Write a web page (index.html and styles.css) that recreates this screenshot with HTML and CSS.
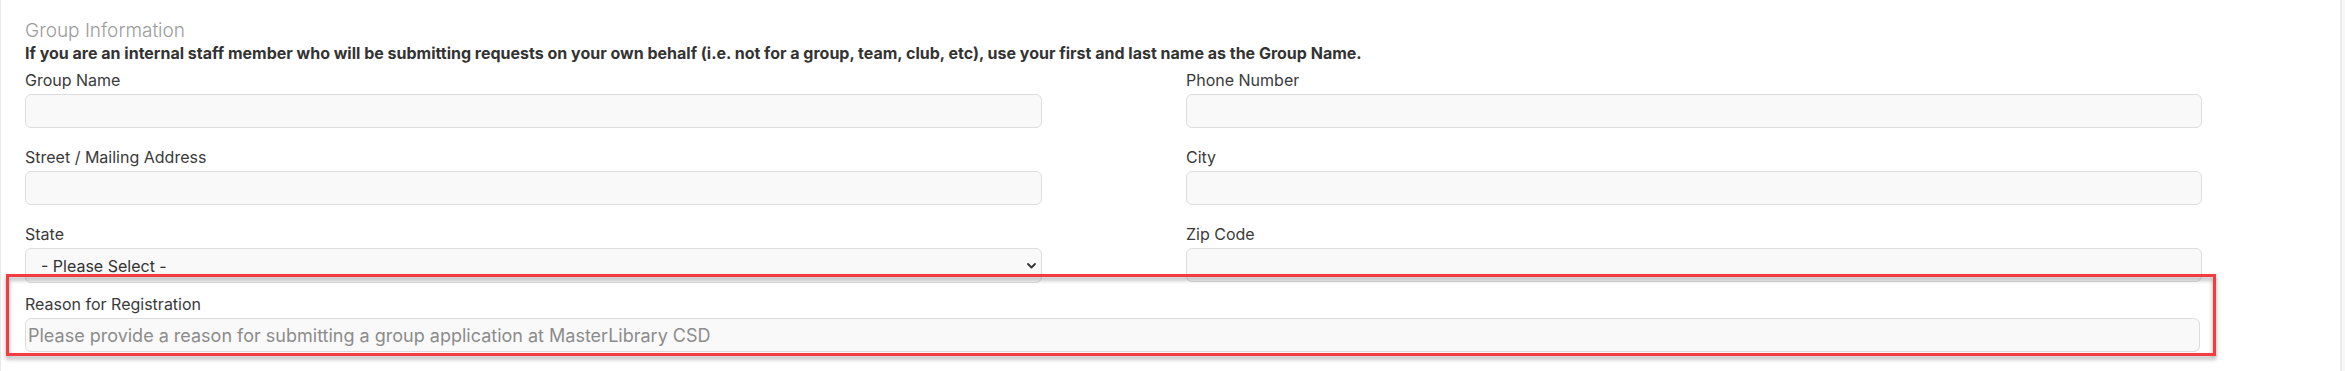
FILE: index.html
```html
<!DOCTYPE html>
<html lang="en">
<head>
<meta charset="utf-8">
<title>Group Information</title>
<link rel="stylesheet" href="styles.css">
</head>
<body>
<div class="page">
  <main class="panel">
    <h2 class="section-title">Group Information</h2>
    <p class="note">If you are an internal staff member who will be submitting requests on your own behalf (i.e. not for a group, team, club, etc), use your first and last name as the Group Name.</p>
    <div class="grid">
      <div class="field">
        <label class="label">Group Name</label>
        <input class="input" type="text">
      </div>
      <div class="field">
        <label class="label">Phone Number</label>
        <input class="input" type="text">
      </div>
      <div class="field">
        <label class="label">Street / Mailing Address</label>
        <input class="input" type="text">
      </div>
      <div class="field">
        <label class="label">City</label>
        <input class="input" type="text">
      </div>
      <div class="field">
        <label class="label">State</label>
        <div class="select-wrap">
          <select class="select">
            <option>- Please Select -</option>
          </select>
          <svg class="chevron" width="9" height="6" viewBox="0 0 9 6"><path d="M1 1l3.5 3.5L8 1" fill="none" stroke="#333" stroke-width="1.8" stroke-linecap="round" stroke-linejoin="round"/></svg>
        </div>
      </div>
      <div class="field">
        <label class="label">Zip Code</label>
        <input class="input" type="text">
      </div>
    </div>
    <div class="reason">
      <label class="label">Reason for Registration</label>
      <input class="input input-reason" type="text" placeholder="Please provide a reason for submitting a group application at MasterLibrary CSD">
      <div class="highlight"></div>
    </div>
  </main>
  <div class="scroll-strip"></div>
</div>
</body>
</html>
```

FILE: styles.css
```css
* { box-sizing: border-box; }

html, body {
  margin: 0;
  padding: 0;
  background: #ffffff;
}

body {
  font-family: Inter, "Noto Sans", "Liberation Sans", sans-serif;
  color: #333333;
  height: 371px;
  overflow: hidden;
}

.page {
  display: flex;
  height: 371px;
}

.panel {
  flex: 1;
  border-left: 1px solid #e8e8e8;
  padding: 19px 0 0 24px;
}

.section-title {
  margin: 0;
  font-size: 19px;
  line-height: 24px;
  font-weight: 300;
  color: #9c9c9c;
}

.note {
  margin: 0;
  font-size: 16px;
  line-height: 20px;
  font-weight: 700;
  color: #333333;
}

.grid {
  display: grid;
  grid-template-columns: 1017px 1016px;
  column-gap: 144px;
  row-gap: 19px;
  margin-top: 7px;
}

.field {
  display: flex;
  flex-direction: column;
}

.label {
  display: block;
  font-size: 16px;
  line-height: 20px;
  color: #3a3a3a;
  margin-bottom: 4px;
}

.input {
  display: block;
  width: 100%;
  height: 34px;
  border: 1px solid #dddddd;
  border-radius: 6px;
  background: #f9f9f9;
  font-family: inherit;
  font-size: 18px;
  padding: 1px 2px;
  color: #333;
  outline: none;
}

.input::placeholder {
  color: #8c8c8c;
}

.select-wrap {
  position: relative;
}

.select {
  display: block;
  width: 100%;
  height: 35px;
  border: 1px solid #dddddd;
  border-radius: 6px;
  background: #f9f9f9;
  font-family: inherit;
  font-size: 16px;
  color: #333;
  padding: 0 0 0 15px;
  appearance: none;
  -webkit-appearance: none;
  outline: none;
}

.chevron {
  position: absolute;
  right: 6px;
  top: 15px;
}

.reason {
  position: relative;
  width: 2175px;
  margin-top: 11px;
}

.highlight {
  position: absolute;
  left: -19px;
  top: -20px;
  right: -16px;
  bottom: -4px;
  border: 3px solid #f23c40;
  filter: drop-shadow(0 3px 2px rgba(0, 0, 0, 0.35));
  pointer-events: none;
}

.scroll-strip {
  width: 5px;
  border-left: 2px solid #ebebeb;
  background: #f7f7f7;
}
```
